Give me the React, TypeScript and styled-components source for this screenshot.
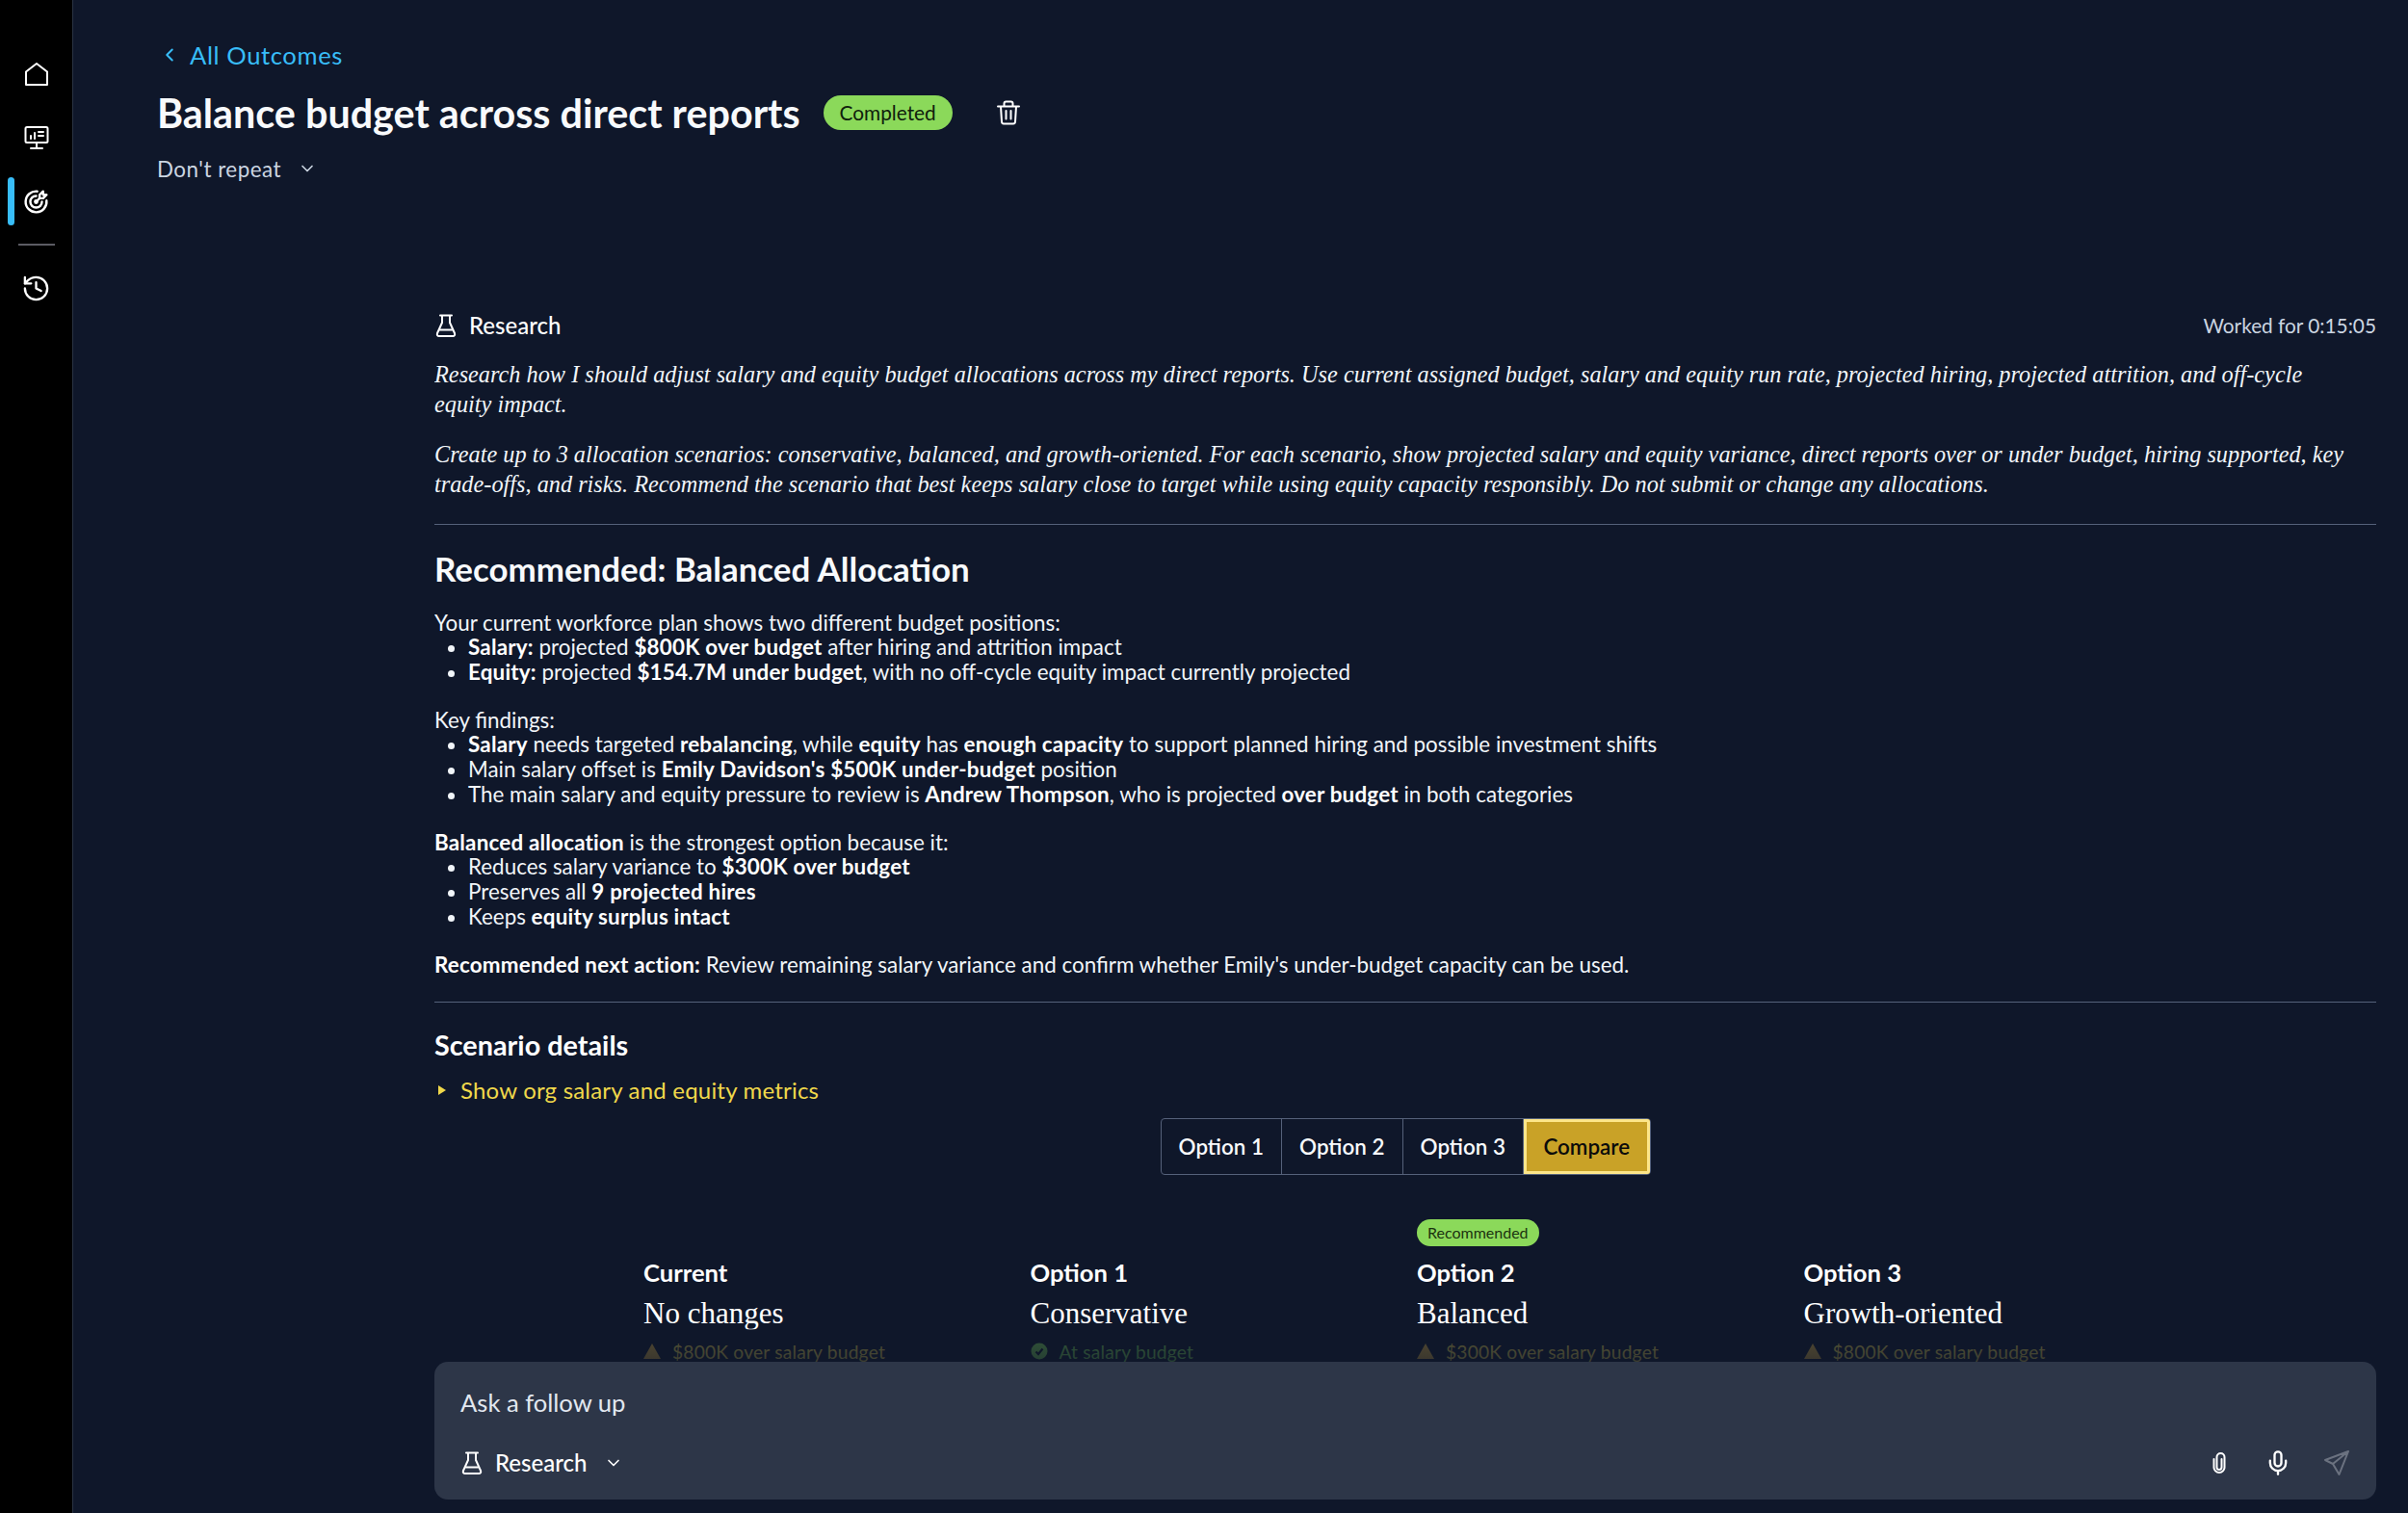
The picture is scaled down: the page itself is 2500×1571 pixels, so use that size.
import styled, { createGlobalStyle } from "styled-components"
import { ChevronDown, ChevronLeft, History, Mic } from "lucide-react"
import { TbTargetArrow } from "react-icons/tb"

const GlobalStyle = createGlobalStyle`
  html, body {
    margin: 0;
    height: 100%;
    background: #0f172a;
  }
  #root {
    height: 100%;
  }
  * {
    box-sizing: border-box;
  }
`

const sans = `"Lato", "Noto Sans", sans-serif`
const serif = `"Liberation Serif", serif`

const HomeIcon = () => (
  <svg width="26" height="26" viewBox="0 0 26 26" fill="none" stroke="#fff" strokeWidth="2" strokeLinejoin="round">
    <path d="M13 2 L24 10.5 V24 H2 V10.5 Z" />
  </svg>
)

const BoardIcon = () => (
  <svg width="26" height="26" viewBox="0 0 26 26" fill="none" stroke="#fff" strokeWidth="2" strokeLinecap="round" strokeLinejoin="round">
    <rect x="1.5" y="2" width="23" height="16" rx="1.5" />
    <path d="M13 18 V23 M7 24 H19 M7 14 V11 M11 14 V8 M15 7 H20 M15 11 H20" />
  </svg>
)

const FlaskIcon = ({ size = 24 }: { size?: number }) => (
  <svg width={size} height={size} viewBox="0 0 24 24" fill="none" stroke="#fff" strokeWidth="2" strokeLinecap="round" strokeLinejoin="round">
    <path d="M6 1.5 H18 M8 1.5 V9 L3 20 Q2.2 23 5 23 H19 Q21.8 23 21 20 L16 9 V1.5 M5.5 16.5 H18.5" />
  </svg>
)

const TrashIcon = () => (
  <svg width="26" height="26" viewBox="0 0 26 26" fill="none" stroke="#fff" strokeWidth="2" strokeLinecap="round" strokeLinejoin="round">
    <path d="M2 6.5 H24 M8.5 6.5 V3.5 Q8.5 1.5 10.5 1.5 H15.5 Q17.5 1.5 17.5 3.5 V6.5 M5 6.5 L6 22.5 Q6.2 24.5 8 24.5 H18 Q19.8 24.5 20 22.5 L21 6.5 M10.5 11 V19.5 M15.5 11 V19.5" />
  </svg>
)

const ClipIcon = () => (
  <svg width="14" height="22" viewBox="0 0 14 22" fill="none" stroke="#fff" strokeWidth="2" strokeLinecap="round" strokeLinejoin="round">
    <path d="M9.5 7 V15.5 A2.5 2.5 0 0 1 4.5 15.5 V5 A4 4 0 0 1 12.5 5 V15.5 A5.5 5.5 0 0 1 1.5 15.5 V7" />
  </svg>
)

const SendIcon = () => (
  <svg width="26" height="26" viewBox="0 0 26 26" fill="none" stroke="#6b7280" strokeWidth="2" strokeLinecap="round" strokeLinejoin="round">
    <path d="M25 1 L1 10 L9 14 L15.5 25 Z M9 14 L25 1" />
  </svg>
)

const WarnIcon = () => (
  <svg width="18" height="18" viewBox="0 0 18 18">
    <path d="M9 1 L18 17 H0 Z" fill="#e2b33f" />
  </svg>
)

const OkIcon = () => (
  <svg width="18" height="18" viewBox="0 0 18 18">
    <circle cx="9" cy="9" r="8.5" fill="#7ed957" />
    <path d="M5.5 9.5 L8 12 L12.5 6.5" fill="none" stroke="#0f172a" strokeWidth="2.2" />
  </svg>
)

const TriangleRight = () => (
  <svg width="10" height="12" viewBox="0 0 10 12">
    <path d="M1 1 L9 6 L1 11 Z" fill="#f0d84a" />
  </svg>
)

const columns = [
  { head: "Current", title: "No changes", note: "$800K over salary budget", ok: false, recommended: false },
  { head: "Option 1", title: "Conservative", note: "At salary budget", ok: true, recommended: false },
  { head: "Option 2", title: "Balanced", note: "$300K over salary budget", ok: false, recommended: true },
  { head: "Option 3", title: "Growth-oriented", note: "$800K over salary budget", ok: false, recommended: false },
]

export default function App() {
  return (
    <>
      <GlobalStyle />
      <Page>
        <Rail>
          <RailItem><HomeIcon /></RailItem>
          <RailItem><BoardIcon /></RailItem>
          <RailItem $active><TbTargetArrow size={29} color="#fff" /></RailItem>
          <RailRule />
          <RailItem><History size={31} color="#fff" strokeWidth={1.8} /></RailItem>
        </Rail>
        <Main>
          <Header>
            <BackLink><ChevronLeft size={22} strokeWidth={2.2} />All Outcomes</BackLink>
            <TitleRow>
              <Title>Balance budget across direct reports</Title>
              <StatusBadge>Completed</StatusBadge>
              <TrashIcon />
            </TitleRow>
            <Repeat>Don't repeat<ChevronDown size={20} strokeWidth={2} /></Repeat>
          </Header>
          <Content>
            <Scroll>
              <MetaRow>
                <MetaLabel><FlaskIcon />Research</MetaLabel>
                <Worked>Worked for 0:15:05</Worked>
              </MetaRow>
              <Prompt>
                Research how I should adjust salary and equity budget allocations across my direct reports. Use current assigned budget, salary and equity run rate, projected hiring, projected attrition, and off-cycle<br />equity impact.
              </Prompt>
              <Prompt>
                Create up to 3 allocation scenarios: conservative, balanced, and growth-oriented. For each scenario, show projected salary and equity variance, direct reports over or under budget, hiring supported, key<br />trade-offs, and risks. Recommend the scenario that best keeps salary close to target while using equity capacity responsibly. Do not submit or change any allocations.
              </Prompt>
              <Rule $top={26} />
              <Heading>Recommended: Balanced Allocation</Heading>
              <Block>
                Your current workforce plan shows two different budget positions:
                <List>
                  <li><b>Salary:</b> projected <b>$800K over budget</b> after hiring and attrition impact</li>
                  <li><b>Equity:</b> projected <b>$154.7M under budget</b>, with no off-cycle equity impact currently projected</li>
                </List>
              </Block>
              <Block>
                Key findings:
                <List>
                  <li><b>Salary</b> needs targeted <b>rebalancing</b>, while <b>equity</b> has <b>enough capacity</b> to support planned hiring and possible investment shifts</li>
                  <li>Main salary offset is <b>Emily Davidson's $500K under-budget</b> position</li>
                  <li>The main salary and equity pressure to review is <b>Andrew Thompson</b>, who is projected <b>over budget</b> in both categories</li>
                </List>
              </Block>
              <Block>
                <b>Balanced allocation</b> is the strongest option because it:
                <List>
                  <li>Reduces salary variance to <b>$300K over budget</b></li>
                  <li>Preserves all <b>9 projected hires</b></li>
                  <li>Keeps <b>equity surplus intact</b></li>
                </List>
              </Block>
              <Block>
                <b>Recommended next action:</b> Review remaining salary variance and confirm whether Emily's under-budget capacity can be used.
              </Block>
              <Rule $top={25.6} />
              <SubHeading>Scenario details</SubHeading>
              <Disclosure><TriangleRight />Show org salary and equity metrics</Disclosure>
              <TabsRow>
                <Tabs>
                  <Tab>Option 1</Tab>
                  <Tab>Option 2</Tab>
                  <Tab>Option 3</Tab>
                  <Tab $active>Compare</Tab>
                </Tabs>
              </TabsRow>
              <CompareGrid>
                {columns.map((c) => (
                  <CompareColumn key={c.head}>
                    <BadgeSlot>{c.recommended && <SmallBadge>Recommended</SmallBadge>}</BadgeSlot>
                    <ColumnHead>{c.head}</ColumnHead>
                    <ColumnTitle>{c.title}</ColumnTitle>
                    <ColumnNote $ok={c.ok}>{c.ok ? <OkIcon /> : <WarnIcon />}{c.note}</ColumnNote>
                  </CompareColumn>
                ))}
              </CompareGrid>
              <Fade />
            </Scroll>
            <Composer>
              <Placeholder>Ask a follow up</Placeholder>
              <ComposerRow>
                <ModeButton><FlaskIcon />Research<ChevronDown size={20} strokeWidth={2} /></ModeButton>
                <ComposerActions>
                  <ActionSlot><ClipIcon /></ActionSlot>
                  <ActionSlot><Mic size={28} color="#fff" strokeWidth={2} /></ActionSlot>
                  <ActionSlot><SendIcon /></ActionSlot>
                </ComposerActions>
              </ComposerRow>
            </Composer>
          </Content>
        </Main>
      </Page>
    </>
  )
}

const Page = styled.div`
  display: flex;
  height: 1571px;
  overflow: hidden;
  background: #0f172a;
  color: #fff;
  font-family: ${sans};
  font-size: 22.4px;
  line-height: 25.6px;
`

const Rail = styled.nav`
  flex: 0 0 76px;
  display: flex;
  flex-direction: column;
  align-items: center;
  padding-top: 44px;
  background: #000;
  border-right: 1px solid #2a3344;
`

const RailItem = styled.div<{ $active?: boolean }>`
  position: relative;
  width: 100%;
  height: 66px;
  display: flex;
  align-items: center;
  justify-content: center;

  &::before {
    content: "";
    display: ${({ $active }) => ($active ? "block" : "none")};
    position: absolute;
    left: 8px;
    top: 8px;
    bottom: 8px;
    width: 7px;
    border-radius: 4px;
    background: #38bdf8;
  }
`

const RailRule = styled.div`
  width: 38px;
  height: 2px;
  margin: 11px 0;
  background: #5b5b63;
`

const Main = styled.main`
  flex: 1;
  min-width: 0;
  display: flex;
  flex-direction: column;
`

const Header = styled.header`
  padding: 42.5px 0 0 87px;
  height: 322px;
  flex: none;
`

const BackLink = styled.div`
  display: flex;
  align-items: center;
  gap: 10px;
  margin-left: 1px;
  color: #38bdf8;
  font-size: 25.6px;
  line-height: 28px;
  letter-spacing: 0.6px;

  svg {
    margin-left: 1px;
  }
`

const TitleRow = styled.div`
  display: flex;
  align-items: center;
  margin-top: 22px;
`

const Title = styled.h1`
  margin: 0;
  font-size: 41.3px;
  line-height: 48px;
  font-weight: 700;
  color: #f8fafc;
`

const StatusBadge = styled.span`
  margin: 0 45px 0 24px;
  padding: 0 17px;
  height: 36px;
  display: flex;
  align-items: center;
  border-radius: 18px;
  background: #8bd95a;
  color: #10200c;
  font-size: 20.8px;
`

const Repeat = styled.div`
  display: flex;
  align-items: center;
  gap: 17px;
  margin-top: 22px;
  color: #cbd5e1;
  letter-spacing: 0.5px;
`

const Content = styled.div`
  flex: 1;
  min-height: 0;
  display: flex;
  flex-direction: column;
  padding: 0 33px 14px 375px;
`

const Scroll = styled.div`
  position: relative;
  flex: 1;
  min-height: 0;
  overflow: hidden;
`

const MetaRow = styled.div`
  display: flex;
  align-items: center;
  justify-content: space-between;
  height: 32px;
`

const MetaLabel = styled.div`
  display: flex;
  align-items: center;
  gap: 12px;
  font-size: 24px;
  font-weight: 500;
`

const Worked = styled.div`
  color: #cbd5e1;
  font-size: 20.8px;
`

const Prompt = styled.p`
  margin: 0 0 21px;
  font-family: ${serif};
  font-style: italic;
  font-size: 24.3px;
  line-height: 31px;
  color: #f1f5f9;

  &:first-of-type {
    margin-top: 19px;
  }
`

const Rule = styled.hr<{ $top: number }>`
  margin: ${({ $top }) => $top}px 0 0;
  border: 0;
  border-top: 1px solid #55617a;
`

const Heading = styled.h2`
  margin: 25.6px 0 23px;
  font-size: 34.9px;
  line-height: 40px;
  font-weight: 700;
  color: #f8fafc;
`

const Block = styled.div`
  margin-bottom: 24.5px;
  color: #f1f5f9;

  b {
    font-weight: 700;
    color: #fff;
    letter-spacing: 0.2px;
  }
`

const List = styled.ul`
  margin: 0;
  padding-left: 35px;
`

const SubHeading = styled.h3`
  margin: 28px 0 0;
  font-size: 28.8px;
  line-height: 32px;
  font-weight: 700;
`

const Disclosure = styled.div`
  display: flex;
  align-items: center;
  gap: 14px;
  margin: 18px 0 0 3px;
  color: #f0d84a;
  font-size: 24px;
  letter-spacing: 0.2px;
`

const TabsRow = styled.div`
  display: flex;
  justify-content: center;
  margin-top: 17px;
`

const Tabs = styled.div`
  display: flex;
  width: 509px;
  height: 59px;
  border: 1px solid #55617a;
  border-radius: 4px;
  overflow: hidden;
`

const Tab = styled.div<{ $active?: boolean }>`
  flex: 1;
  display: flex;
  align-items: center;
  justify-content: center;
  font-weight: 600;
  background: ${({ $active }) => ($active ? "#c9a227" : "transparent")};
  color: ${({ $active }) => ($active ? "#0b0b0b" : "#f8fafc")};
  border: ${({ $active }) => ($active ? "3px solid #fde68a" : "0")};
  border-right: ${({ $active }) => ($active ? "3px solid #fde68a" : "1px solid #55617a")};
`

const CompareGrid = styled.div`
  display: grid;
  grid-template-columns: repeat(4, 401.5px);
  margin: 45px 0 0 217px;
`

const CompareColumn = styled.div`
  display: flex;
  flex-direction: column;
`

const BadgeSlot = styled.div`
  height: 28px;
  margin-bottom: 15.6px;
`

const SmallBadge = styled.span`
  display: inline-flex;
  align-items: center;
  height: 28px;
  padding: 0 11px;
  border-radius: 14px;
  background: #8bd95a;
  color: #1c3310;
  font-size: 16px;
`

const ColumnHead = styled.div`
  font-weight: 700;
  font-size: 25.6px;
`

const ColumnTitle = styled.div`
  margin-top: 11px;
  font-family: ${serif};
  font-size: 31px;
  line-height: 36px;
`

const ColumnNote = styled.div<{ $ok: boolean }>`
  display: flex;
  align-items: center;
  gap: 12px;
  margin-top: 9px;
  color: ${({ $ok }) => ($ok ? "#7ed957" : "#e8d44d")};
  font-size: 19.2px;
  letter-spacing: 0.2px;
`

const Fade = styled.div`
  position: absolute;
  left: 0;
  right: 0;
  bottom: 0;
  height: 34px;
  background: linear-gradient(rgba(15, 23, 42, 0.66), rgba(15, 23, 42, 0.8));
`

const Composer = styled.div`
  flex: none;
  height: 143px;
  padding: 29px 27px 0;
  border-radius: 14px;
  background: #2d3648;
`

const Placeholder = styled.div`
  font-size: 25.6px;
  line-height: 26px;
  color: #e2e8f0;
`

const ComposerRow = styled.div`
  display: flex;
  align-items: center;
  justify-content: space-between;
  margin-top: 35px;
`

const ModeButton = styled.div`
  display: flex;
  align-items: center;
  gap: 12px;
  font-size: 24px;
  font-weight: 500;

  svg:last-child {
    margin-left: 6px;
  }
`

const ComposerActions = styled.div`
  display: flex;
  align-items: center;
  gap: 21px;
  margin-right: -6px;
`

const ActionSlot = styled.div`
  display: flex;
  align-items: center;
  justify-content: center;
  width: 40px;
  height: 30px;
`
